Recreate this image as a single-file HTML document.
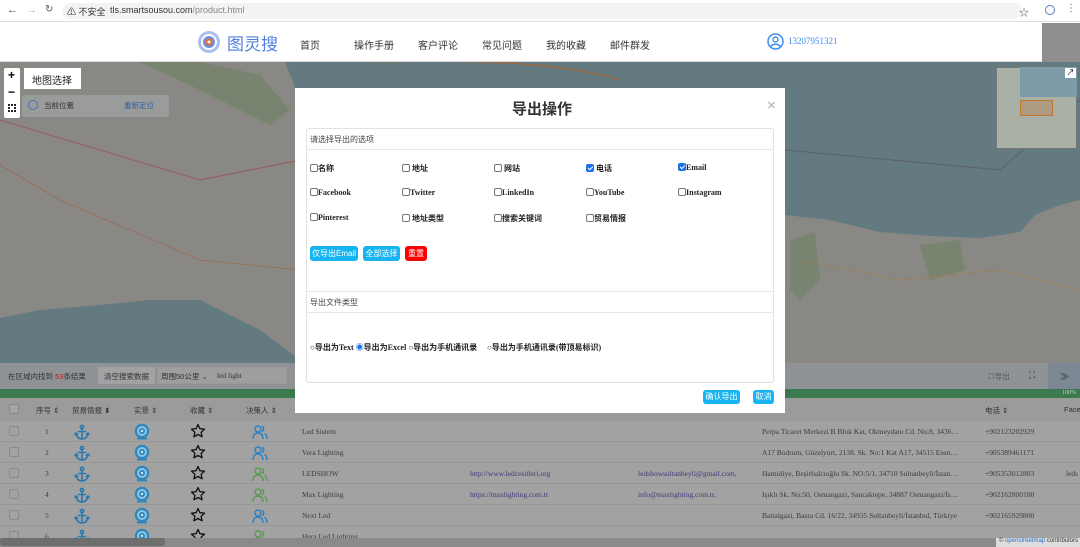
<!DOCTYPE html>
<html><head><meta charset="utf-8"><style>
*{margin:0;padding:0;box-sizing:border-box}
body{width:1080px;height:547px;overflow:hidden;position:relative;font-family:"Liberation Sans","Noto Sans CJK SC",sans-serif;background:#fff}
.abs{position:absolute}
.se{font-family:"Liberation Serif","Noto Serif CJK SC",serif}
.cb{display:inline-block;width:8px;height:8px;border:1px solid #777;border-radius:2px;vertical-align:-1px;background:#fff;position:relative}
.cb.on{background:#1a73e8;border-color:#1a73e8}
.cb.on:after{content:"";position:absolute;left:2px;top:0px;width:2px;height:4px;border:solid #fff;border-width:0 1px 1px 0;transform:rotate(45deg)}
.opt{position:absolute;font-size:8px;font-weight:bold;color:#222;font-family:"Liberation Serif","Noto Sans CJK SC",serif}
.btn{position:absolute;background:#16b4f0;color:#fff;font-size:8px;border-radius:3px;text-align:center}
.row{position:absolute;left:0;width:1080px;height:21px;border-bottom:1px solid #979797;background:#a2a2a2}
.rt{position:absolute;font-size:7.5px;color:#3c3c3c;font-family:"Liberation Serif",serif;top:6px;white-space:nowrap}
.lk{color:#3a3a7a}
.ck{position:absolute;left:9px;top:5px;width:10px;height:10px;border:1px solid #8a8a8a;border-radius:2px}
</style></head><body>
<svg width="0" height="0" style="position:absolute">
<defs>
<g id="anc" fill="none" stroke="#2a78b0" stroke-width="1.6" stroke-linecap="round"><circle cx="8" cy="3" r="1.6"/><path d="M8 4.6V15M4.5 7.5h7M2 10c1 3.5 3.5 5 6 5s5-1.5 6-5"/><path d="M1 10.5l1-1.5 1.5 1.2M15 10.5l-1-1.5-1.5 1.2"/></g>
<g id="cam"><circle cx="8" cy="8" r="7.2" fill="#2f86bb"/><circle cx="8" cy="8" r="5" fill="#8cc6e4"/><circle cx="8" cy="8" r="3" fill="#2f86bb"/><circle cx="8" cy="8" r="1.2" fill="#cfe8f4"/><path d="M3 14.5h10v2H3z" fill="#2f86bb"/></g>
<g id="star"><path d="M8 1.5l1.9 4.2 4.6.5-3.4 3.1 1 4.5L8 11.5l-4.1 2.3 1-4.5L1.5 6.2l4.6-.5z" fill="none" stroke="#111" stroke-width="1.3" stroke-linejoin="round"/></g>
<g id="ppl" fill="none" stroke-width="1.4"><circle cx="6" cy="5" r="3"/><path d="M1 15c0-4 2.2-6 5-6s5 2 5 6"/><path d="M10 2.3a3 3 0 010 5.4M12.5 9.5c1.7.8 2.5 2.8 2.5 5.5"/></g>
</defs></svg>
<!-- browser bar -->
<div class="abs" style="left:0;top:0;width:1080px;height:22px;background:#fff;border-bottom:1px solid #ddd"></div>
<div class="abs" style="left:7px;top:4px;font-size:11px;color:#555">←</div>
<div class="abs" style="left:26px;top:4px;font-size:11px;color:#bbb">→</div>
<div class="abs" style="left:45px;top:4px;font-size:10px;color:#555">↻</div>
<div class="abs" style="left:62px;top:3px;width:960px;height:16px;border-radius:8px;background:#f1f3f4"></div>
<div class="abs" style="left:67px;top:5px;font-size:9px;color:#333">⚠ 不安全</div>
<div class="abs" style="left:110px;top:5px;font-size:9px;color:#333">tls.smartsousou.com<span style="color:#888">/product.html</span></div>
<div class="abs" style="left:1019px;top:4px;font-size:10px;color:#555">☆</div>
<div class="abs" style="left:1045px;top:5px;width:10px;height:10px;border:1.5px solid #5a7bc0;border-radius:50%"></div>
<div class="abs" style="left:1066px;top:3px;font-size:10px;color:#555">⋮</div>
<!-- header -->
<div class="abs" style="left:0;top:23px;width:1080px;height:39px;background:#fff;border-bottom:1px solid #ddd"></div>
<div class="abs" style="left:1042px;top:23px;width:38px;height:39px;background:#8e8e8e"></div>
<svg class="abs" style="left:197px;top:30px" width="24" height="24" viewBox="0 0 24 24"><circle cx="12" cy="12" r="11" fill="#a9bff0"/><circle cx="12" cy="12" r="8" fill="#fff"/><circle cx="12" cy="12" r="6" fill="#6c8fe0"/><circle cx="12" cy="12" r="3.5" fill="#f06a2a"/><circle cx="12" cy="12" r="1.5" fill="#fff"/></svg>
<div class="abs" style="left:227px;top:30px;font-size:17px;color:#4f7fe0">图灵搜</div>
<div class="abs" style="left:300px;top:37px;font-size:10px;color:#333">首页</div>
<div class="abs" style="left:354px;top:37px;font-size:10px;color:#333">操作手册</div>
<div class="abs" style="left:418px;top:37px;font-size:10px;color:#333">客户评论</div>
<div class="abs" style="left:482px;top:37px;font-size:10px;color:#333">常见问题</div>
<div class="abs" style="left:546px;top:37px;font-size:10px;color:#333">我的收藏</div>
<div class="abs" style="left:610px;top:37px;font-size:10px;color:#333">邮件群发</div>
<svg class="abs" style="left:767px;top:33px" width="17" height="17" viewBox="0 0 17 17"><circle cx="8.5" cy="8.5" r="7.5" fill="none" stroke="#3d8ff0" stroke-width="1.5"/><circle cx="8.5" cy="6.5" r="2.5" fill="none" stroke="#3d8ff0" stroke-width="1.4"/><path d="M4 13.5c1-3 8-3 9 0" fill="none" stroke="#3d8ff0" stroke-width="1.4"/></svg>
<div class="abs se" style="left:788px;top:36px;font-size:9px;color:#3d8ff0">13207951321</div>
<!-- map -->
<svg class="abs" style="left:0;top:62px" width="1080" height="301" viewBox="0 62 1080 301">
<rect x="0" y="62" width="1080" height="301" fill="#627a80"/>
<path d="M0 62 L285 62 L300 100 L300 360 L260 330 L200 300 L150 300 L100 305 L40 310 L0 318 Z" fill="#898884"/>
<path d="M785 215 L830 220 L880 232 L930 236 L980 238 L1020 232 L1035 215 L1060 205 L1080 200 L1080 363 L785 363 Z" fill="#898884"/>
<path d="M140 62 L200 62 L260 75 L290 110 L270 125 L240 110 L200 90 Z" fill="#78846f"/>
<path d="M790 240 L815 232 L820 280 L800 300 L790 290 Z" fill="#78846f"/>
<path d="M920 245 L960 240 L965 270 L930 280 Z" fill="#78846f"/>
<path d="M0 120 L100 150 L200 180 L300 160" fill="none" stroke="#9a5a5a" stroke-width="1"/>
<path d="M0 165 L60 200 L200 260 L300 270" fill="none" stroke="#9a6a50" stroke-width="0.8"/>
<path d="M380 62 C480 60 560 62 620 80" fill="none" stroke="#b0602a" stroke-width="1"/>
<path d="M785 150 L1000 170 L1080 100" fill="none" stroke="#5a5a68" stroke-width="0.8"/>
<path d="M800 260 L900 280 L1000 270 L1080 290" fill="none" stroke="#9a8050" stroke-width="0.7"/>
</svg>
<!-- map controls -->
<div class="abs" style="left:4px;top:68px;width:16px;height:50px;background:#fff;border-radius:2px"></div>
<div class="abs" style="left:8px;top:68px;font-size:12px;font-weight:bold">+</div>
<div class="abs" style="left:8px;top:85px;font-size:12px;font-weight:bold">−</div>
<div class="abs" style="left:8px;top:104px;width:8px;height:8px;border:2px dotted #222"></div>
<div class="abs" style="left:24px;top:68px;width:57px;height:21px;background:#fff;font-size:10px;color:#222;padding:4px 0 0 8px">地图选择</div>
<div class="abs" style="left:22px;top:95px;width:147px;height:22px;background:#9a9c9c;border-radius:3px"></div>
<div class="abs" style="left:28px;top:100px;width:10px;height:10px;border:1.5px solid #4a6fb0;border-radius:50%"></div>
<div class="abs" style="left:44px;top:100px;font-size:7.5px;color:#333">当前位置</div>
<div class="abs" style="left:124px;top:100px;font-size:7.5px;color:#2f5fa0">重新定位</div>
<!-- minimap -->
<div class="abs" style="left:996px;top:67px;width:81px;height:82px;background:#a9b0a6;border:1px solid #777"></div>
<div class="abs" style="left:1020px;top:67px;width:57px;height:30px;background:#7f9ba8"></div>
<div class="abs" style="left:1020px;top:100px;width:33px;height:16px;border:1px solid #c07a30;background:#ad9a80"></div>
<div class="abs" style="left:1065px;top:68px;width:11px;height:10px;background:#fff;font-size:8px;line-height:10px;text-align:center">↗</div>
<!-- toolbar -->
<div class="abs" style="left:0;top:363px;width:1080px;height:26px;background:#8f9396"></div>
<div class="abs" style="left:1048px;top:363px;width:32px;height:26px;background:#7d8894"></div>
<div class="abs" style="left:8px;top:371px;font-size:7.5px;color:#333">在区域内找到 <span style="color:#b02020">53</span>条结果</div>
<div class="abs" style="left:98px;top:367px;width:57px;height:17px;background:#a0a2a4;font-size:7.5px;color:#333;padding:4px 0 0 6px">清空搜索数据</div>
<div class="abs" style="left:157px;top:367px;width:130px;height:17px;border:1px solid #999;background:#9c9ea0"></div>
<div class="abs" style="left:161px;top:371px;font-size:7.5px;color:#333">周围50公里 ⌄</div>
<div class="abs se" style="left:217px;top:371px;font-size:7.5px;color:#333">led light</div>
<div class="abs" style="left:988px;top:371px;font-size:7.5px;color:#555">☐导出</div>
<div class="abs" style="left:1029px;top:370px;font-size:9px;color:#222">⛶</div>
<div class="abs" style="left:1060px;top:370px;font-size:9px;color:#333">≫</div>
<div class="abs" style="left:0;top:389px;width:1080px;height:9px;background:#3b7a4e"></div>
<div class="abs se" style="left:1062px;top:390px;font-size:6px;color:#ccc">100%</div>
<!-- table header -->
<div class="abs" style="left:0;top:398px;width:1080px;height:23px;background:#9b9b9b"></div>
<div class="abs" style="left:9px;top:404px;width:10px;height:10px;border:1px solid #888;border-radius:2px;background:#a4a4a4"></div>
<div class="abs" style="left:36px;top:405px;font-size:7.5px;color:#333">序号 ⇕</div>
<div class="abs" style="left:72px;top:405px;font-size:7.5px;color:#333">贸易情报 ⬍</div>
<div class="abs" style="left:134px;top:405px;font-size:7.5px;color:#333">实景 ⇕</div>
<div class="abs" style="left:190px;top:405px;font-size:7.5px;color:#333">收藏 ⇕</div>
<div class="abs" style="left:246px;top:405px;font-size:7.5px;color:#333">决策人 ⇕</div>
<div class="abs" style="left:985px;top:405px;font-size:7.5px;color:#333">电话 ⇕</div>
<div class="abs" style="left:1064px;top:405px;font-size:7.5px;color:#333">Face</div>
<!-- rows -->
<div class="row" style="top:421px"></div><div class="row" style="top:442px"></div><div class="row" style="top:463px"></div><div class="row" style="top:484px"></div><div class="row" style="top:505px"></div><div class="row" style="top:526px"></div>

<div class="abs" style="left:0;top:421px;width:1080px;height:117px;overflow:hidden">
 <div class="abs" style="top:0;left:0;width:1080px;height:21px">
  <div class="ck"></div><div class="rt" style="left:45px">1</div>
  <svg class="abs" style="left:74px;top:3px" width="16" height="16"><use href="#anc"/></svg>
  <svg class="abs" style="left:134px;top:2px" width="16" height="17"><use href="#cam"/></svg>
  <svg class="abs" style="left:190px;top:2px" width="16" height="16"><use href="#star"/></svg>
  <svg class="abs" style="left:252px;top:3px" width="16" height="16" stroke="#2a80c0"><use href="#ppl"/></svg>
  <div class="rt" style="left:302px">Led Sistem</div>
  <div class="rt" style="left:762px">Perpa Ticaret Merkezi B Blok Kat, Okmeydanı Cd. No:8, 3436…</div>
  <div class="rt" style="left:985px">+902123202929</div>
 </div>
 <div class="abs" style="top:21px;left:0;width:1080px;height:21px">
  <div class="ck"></div><div class="rt" style="left:45px">2</div>
  <svg class="abs" style="left:74px;top:3px" width="16" height="16"><use href="#anc"/></svg>
  <svg class="abs" style="left:134px;top:2px" width="16" height="17"><use href="#cam"/></svg>
  <svg class="abs" style="left:190px;top:2px" width="16" height="16"><use href="#star"/></svg>
  <svg class="abs" style="left:252px;top:3px" width="16" height="16" stroke="#2a80c0"><use href="#ppl"/></svg>
  <div class="rt" style="left:302px">Vera Lighting</div>
  <div class="rt" style="left:762px">A17 Bodrum, Güzelyurt, 2138. Sk. No:1 Kat A17, 34515 Esen…</div>
  <div class="rt" style="left:985px">+905389461171</div>
 </div>
 <div class="abs" style="top:42px;left:0;width:1080px;height:21px">
  <div class="ck"></div><div class="rt" style="left:45px">3</div>
  <svg class="abs" style="left:74px;top:3px" width="16" height="16"><use href="#anc"/></svg>
  <svg class="abs" style="left:134px;top:2px" width="16" height="17"><use href="#cam"/></svg>
  <svg class="abs" style="left:190px;top:2px" width="16" height="16"><use href="#star"/></svg>
  <svg class="abs" style="left:252px;top:3px" width="16" height="16" stroke="#5a9a50"><use href="#ppl"/></svg>
  <div class="rt" style="left:302px">LEDSHOW</div>
  <div class="rt lk" style="left:470px">http://www.ledcesitleri.org</div>
  <div class="rt lk" style="left:638px">ledshowsultanbeyli@gmail.com,</div>
  <div class="rt" style="left:762px">Hamidiye, Beşirbalcıoğlu Sk. NO:5/1, 34710 Sultanbeyli/İstan…</div>
  <div class="rt" style="left:985px">+905353012803</div>
  <div class="rt" style="left:1066px">leds</div>
 </div>
 <div class="abs" style="top:63px;left:0;width:1080px;height:21px">
  <div class="ck"></div><div class="rt" style="left:45px">4</div>
  <svg class="abs" style="left:74px;top:3px" width="16" height="16"><use href="#anc"/></svg>
  <svg class="abs" style="left:134px;top:2px" width="16" height="17"><use href="#cam"/></svg>
  <svg class="abs" style="left:190px;top:2px" width="16" height="16"><use href="#star"/></svg>
  <svg class="abs" style="left:252px;top:3px" width="16" height="16" stroke="#5a9a50"><use href="#ppl"/></svg>
  <div class="rt" style="left:302px">Max Lighting</div>
  <div class="rt lk" style="left:470px">https://maxlighting.com.tr</div>
  <div class="rt lk" style="left:638px">info@maxlighting.com.tr,</div>
  <div class="rt" style="left:762px">Işıklı Sk. No:50, Osmangazi, Sancaktepe, 34887 Osmangazi/İs…</div>
  <div class="rt" style="left:985px">+902162800100</div>
 </div>
 <div class="abs" style="top:84px;left:0;width:1080px;height:21px">
  <div class="ck"></div><div class="rt" style="left:45px">5</div>
  <svg class="abs" style="left:74px;top:3px" width="16" height="16"><use href="#anc"/></svg>
  <svg class="abs" style="left:134px;top:2px" width="16" height="17"><use href="#cam"/></svg>
  <svg class="abs" style="left:190px;top:2px" width="16" height="16"><use href="#star"/></svg>
  <svg class="abs" style="left:252px;top:3px" width="16" height="16" stroke="#2a80c0"><use href="#ppl"/></svg>
  <div class="rt" style="left:302px">Next Led</div>
  <div class="rt" style="left:762px">Battalgazi, Basra Cd. 16/22, 34935 Sultanbeyli/İstanbul, Türkiye</div>
  <div class="rt" style="left:985px">+902165929800</div>
 </div>
 <div class="abs" style="top:105px;left:0;width:1080px;height:21px">
  <div class="ck"></div><div class="rt" style="left:45px">6</div>
  <svg class="abs" style="left:74px;top:3px" width="16" height="16"><use href="#anc"/></svg>
  <svg class="abs" style="left:134px;top:2px" width="16" height="17"><use href="#cam"/></svg>
  <svg class="abs" style="left:190px;top:2px" width="16" height="16"><use href="#star"/></svg>
  <svg class="abs" style="left:252px;top:3px" width="16" height="16" stroke="#5a9a50"><use href="#ppl"/></svg>
  <div class="rt" style="left:302px">Hera Led Lighting</div>
 </div>
</div>
<div class="abs" style="left:0;top:538px;width:1080px;height:9px;background:#8a8a8a"></div>
<div class="abs" style="left:0;top:538px;width:165px;height:8px;background:#6e6e6e;border-radius:3px"></div>
<div class="abs" style="left:996px;top:538px;width:84px;height:9px;background:#ddd;font-size:6px;color:#333;padding-left:3px">© <span style="color:#2a70c0">openstreetmap</span> contributors</div>

<!-- modal -->
<div class="abs" style="left:295px;top:88px;width:490px;height:325px;background:#fff"></div>
<div class="abs" style="left:512px;top:98px;font-size:15px;font-weight:bold;color:#333">导出操作</div>
<div class="abs" style="left:767px;top:97px;font-size:15px;color:#aaa">×</div>
<div class="abs" style="left:306px;top:128px;width:468px;height:255px;border:1px solid #e2e2e2;border-radius:3px"></div>
<div class="abs" style="left:306px;top:149px;width:468px;height:1px;background:#e6e6e6"></div>
<div class="abs" style="left:310px;top:134px;font-size:8px;color:#444">请选择导出的选项</div>
<div class="opt" style="left:310px;top:163px"><span class="cb"></span>名称</div>
<div class="opt" style="left:402px;top:163px"><span class="cb"></span> 地址</div>
<div class="opt" style="left:494px;top:163px"><span class="cb"></span> 网站</div>
<div class="opt" style="left:586px;top:163px"><span class="cb on"></span> 电话</div>
<div class="opt" style="left:678px;top:163px"><span class="cb on"></span>Email</div>
<div class="opt" style="left:310px;top:188px"><span class="cb"></span>Facebook</div>
<div class="opt" style="left:402px;top:188px"><span class="cb"></span>Twitter</div>
<div class="opt" style="left:494px;top:188px"><span class="cb"></span>LinkedIn</div>
<div class="opt" style="left:586px;top:188px"><span class="cb"></span>YouTube</div>
<div class="opt" style="left:678px;top:188px"><span class="cb"></span>Instagram</div>
<div class="opt" style="left:310px;top:213px"><span class="cb"></span>Pinterest</div>
<div class="opt" style="left:402px;top:213px"><span class="cb"></span> 地址类型</div>
<div class="opt" style="left:494px;top:213px"><span class="cb"></span>搜索关键词</div>
<div class="opt" style="left:586px;top:213px"><span class="cb"></span>贸易情报</div>
<div class="btn" style="left:310px;top:246px;width:48px;height:15px;line-height:15px">仅导出Email</div>
<div class="btn" style="left:363px;top:246px;width:37px;height:15px;line-height:15px">全部选择</div>
<div class="btn" style="left:405px;top:246px;width:22px;height:15px;line-height:15px;background:#f00">重置</div>
<div class="abs" style="left:306px;top:291px;width:468px;height:1px;background:#e6e6e6"></div>
<div class="abs" style="left:306px;top:312px;width:468px;height:1px;background:#e6e6e6"></div>
<div class="abs" style="left:310px;top:297px;font-size:8px;color:#444">导出文件类型</div>
<div class="opt" style="left:310px;top:342px">○导出为Text <span style="color:#1a73e8">◉</span>导出为Excel ○导出为手机通讯录</div>
<div class="opt" style="left:487px;top:342px">○导出为手机通讯录(带顶易标识)</div>
<div class="btn" style="left:703px;top:390px;width:37px;height:14px;line-height:14px">确认导出</div>
<div class="btn" style="left:753px;top:390px;width:21px;height:14px;line-height:14px">取消</div>
</body></html>
